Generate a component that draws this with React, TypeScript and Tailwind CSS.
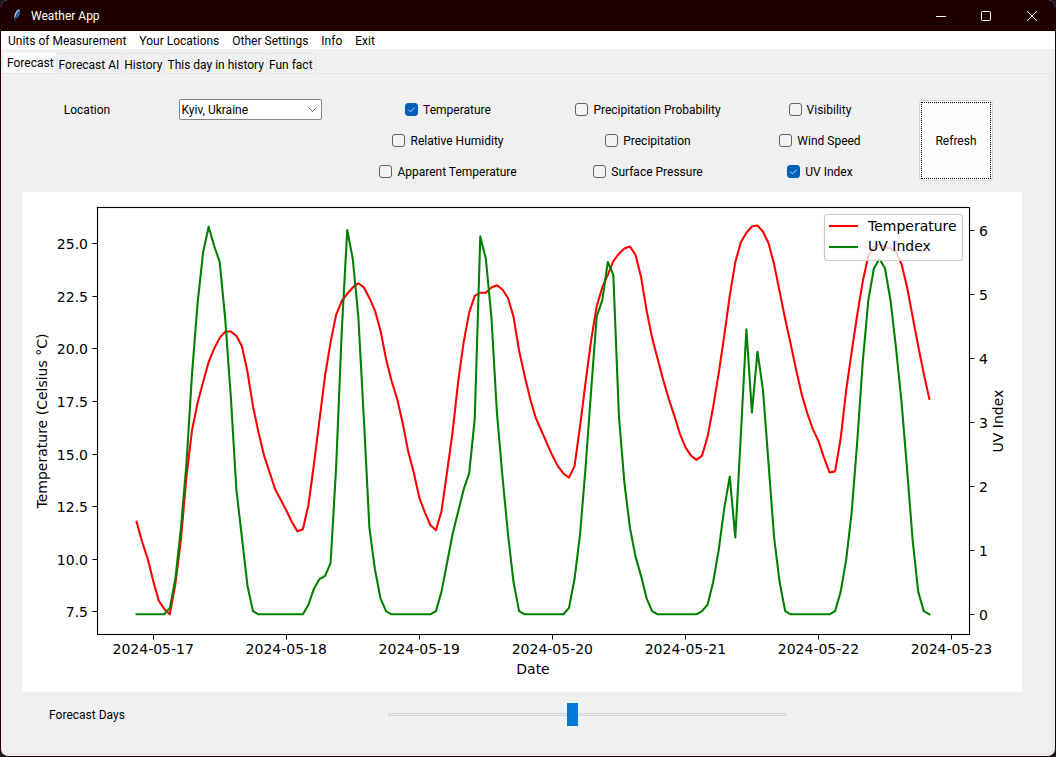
import { useState } from "react";

const TEMPERATURE = [
  11.75, 10.8, 10.0, 8.95, 8.0, 7.6, 7.35, 8.8, 10.9, 13.9, 16.1, 17.4, 18.4, 19.35, 20.0, 20.5, 20.8, 20.8, 20.6, 20.1,
  18.9, 17.25, 16.0, 14.9, 14.1, 13.3, 12.8, 12.3, 11.75, 11.3, 11.4, 12.55, 14.5, 16.6, 18.7, 20.3, 21.6, 22.25, 22.6,
  22.9, 23.1, 22.9, 22.4, 21.8, 20.85, 19.5, 18.45, 17.6, 16.45, 15.1, 14.1, 12.9, 12.2, 11.6, 11.35, 12.25, 14.1, 16.0,
  18.4, 20.3, 21.7, 22.5, 22.65, 22.65, 22.9, 23.0, 22.8, 22.4, 21.5, 19.9, 18.7, 17.6, 16.7, 16.1, 15.5, 14.9, 14.4,
  14.05, 13.85, 14.4, 16.3, 18.4, 20.4, 22.0, 22.9, 23.5, 24.15, 24.5, 24.75, 24.85, 24.45, 23.4, 21.8, 20.5, 19.5, 18.5,
  17.6, 16.8, 15.95, 15.3, 14.9, 14.7, 14.9, 15.8, 17.2, 18.8, 20.6, 22.5, 24.1, 25.05, 25.5, 25.8, 25.85, 25.55, 25.0,
  24.0, 22.7, 21.4, 20.2, 18.95, 17.8, 16.9, 16.15, 15.6, 14.8, 14.1, 14.15, 15.7, 18.0, 19.85, 21.6, 23.2, 24.4, 24.85,
  24.95, 24.85, 24.75, 24.6, 24.0, 22.9, 21.5, 20.1, 18.8, 17.6,
];

const UV_INDEX = [
  0, 0, 0, 0, 0, 0, 0.1, 0.55, 1.35, 2.35, 3.75, 4.85, 5.65, 6.05, 5.75, 5.5, 4.6, 3.4, 1.95, 1.2, 0.45, 0.05, 0, 0, 0,
  0, 0, 0, 0, 0, 0, 0.15, 0.4, 0.55, 0.6, 0.8, 2.3, 4.4, 6.0, 5.55, 4.65, 3.05, 1.35, 0.7, 0.25, 0.05, 0, 0, 0, 0, 0, 0,
  0, 0, 0.05, 0.35, 0.8, 1.25, 1.6, 1.95, 2.2, 3.05, 5.9, 5.55, 4.65, 3.15, 2.15, 1.25, 0.5, 0.05, 0, 0, 0, 0, 0, 0, 0,
  0, 0.1, 0.55, 1.25, 2.3, 3.5, 4.65, 4.9, 5.5, 5.3, 3.1, 2.05, 1.35, 0.9, 0.6, 0.25, 0.05, 0, 0, 0, 0, 0, 0, 0, 0,
  0.05, 0.15, 0.5, 1.0, 1.65, 2.15, 1.2, 2.8, 4.45, 3.15, 4.1, 3.5, 2.35, 1.2, 0.5, 0.05, 0, 0, 0, 0, 0, 0, 0, 0, 0.05,
  0.35, 0.85, 1.6, 2.7, 3.95, 4.9, 5.4, 5.55, 5.4, 4.9, 4.15, 3.3, 2.25, 1.15, 0.35, 0.05, 0,
];

const DAYS = [17, 18, 19, 20, 21, 22, 23];
const TEMP_TICKS = [7.5, 10, 12.5, 15, 17.5, 20, 22.5, 25];
const UV_TICKS = [0, 1, 2, 3, 4, 5, 6];

const DAY_WIDTH = 133.05;
const xOfHour = (hour: number) => 131.2 + (hour * DAY_WIDTH) / 24;
const yOfTemp = (t: number) => 51.3 + (25 - t) * 21.02;
const yOfUv = (u: number) => 422.3 - u * 64.05;
const snap = (v: number) => Math.floor(v) + 0.5;

const linePoints = (values: number[], y: (v: number) => number) =>
  values.map((v, i) => `${xOfHour(i - 3).toFixed(2)},${y(v).toFixed(2)}`).join(" ");

function ForecastChart({ showTemp, showUv }: { showTemp: boolean; showUv: boolean }) {
  return (
    <svg
      viewBox="0 0 1000 500"
      role="img"
      aria-label="Temperature and UV index by date"
      className="block w-full bg-white font-['DejaVu_Sans',sans-serif] text-[14px]"
    >
      <g fill="none" strokeWidth="2.08" strokeLinejoin="round" strokeLinecap="square">
        {showTemp && <polyline stroke="#ff0000" points={linePoints(TEMPERATURE, yOfTemp)} />}
        {showUv && <polyline stroke="#008000" points={linePoints(UV_INDEX, yOfUv)} />}
      </g>
      <rect x="75.5" y="15.5" width="872" height="427" fill="none" stroke="#000" strokeWidth="1.1" />
      {DAYS.map((day, i) => (
        <g key={day}>
          <path d={`M${snap(xOfHour(i * 24) + 0.3)} 443v4.5`} stroke="#000" />
          <text x={xOfHour(i * 24)} y="462" textAnchor="middle">{`2024-05-${day}`}</text>
        </g>
      ))}
      {TEMP_TICKS.map((t) => (
        <g key={t}>
          <path d={`M75 ${snap(yOfTemp(t) + 0.6)}h-4.5`} stroke="#000" />
          <text x="66" y={snap(yOfTemp(t) + 0.6) + 5.5} textAnchor="end">
            {t.toFixed(1)}
          </text>
        </g>
      ))}
      {UV_TICKS.map((u) => (
        <g key={u}>
          <path d={`M948 ${snap(yOfUv(u) + 0.2)}h4.5`} stroke="#000" />
          <text x="957" y={snap(yOfUv(u) + 0.2) + 5}>
            {u}
          </text>
        </g>
      ))}
      <text x="511" y="482" textAnchor="middle">
        Date
      </text>
      <text transform="translate(25 229) rotate(-90)" textAnchor="middle">
        Temperature (Celsius °C)
      </text>
      <text transform="translate(981 229) rotate(-90)" textAnchor="middle">
        UV Index
      </text>
      <rect x="802.5" y="22.5" width="138" height="46" rx="3" fill="#fff" fillOpacity="0.8" stroke="#ccc" strokeWidth="1.2" />
      <path d="M807 34h29" stroke="#ff0000" strokeWidth="2.08" />
      <path d="M807 55h29" stroke="#008000" strokeWidth="2.08" />
      <text x="846" y="39">
        Temperature
      </text>
      <text x="846" y="59">
        UV Index
      </text>
    </svg>
  );
}

function Check({ label, checked, onChange }: { label: string; checked: boolean; onChange: () => void }) {
  return (
    <label className="flex h-[31px] items-center justify-center gap-[5px] whitespace-nowrap">
      <span className="grid size-[13px] place-items-center">
        <input
          type="checkbox"
          checked={checked}
          onChange={onChange}
          className="peer col-start-1 row-start-1 size-[13px] appearance-none rounded-[3px] border border-[#626262] bg-[#f3f3f3] checked:border-[#005fb8] checked:bg-[#005fb8]"
        />
        <svg
          viewBox="0 0 13 13"
          className="pointer-events-none invisible col-start-1 row-start-1 size-[13px] peer-checked:visible"
          fill="none"
          stroke="#cfe2f4"
          strokeWidth="1"
        >
          <path d="M3.3 6.6 5.5 8.8 9.8 4.5" />
        </svg>
      </span>
      {label}
    </label>
  );
}

const CHECK_COLUMNS = [
  ["Temperature", "Relative Humidity", "Apparent Temperature"],
  ["Precipitation Probability", "Precipitation", "Surface Pressure"],
  ["Visibility", "Wind Speed", "UV Index"],
];

const MENUS = ["Units of Measurement", "Your Locations", "Other Settings", "Info", "Exit"];
const TABS = ["Forecast AI", "History", "This day in history", "Fun fact"];

export default function App() {
  const [selected, setSelected] = useState<string[]>(["Temperature", "UV Index"]);
  const [days, setDays] = useState(7);
  const toggle = (name: string) =>
    setSelected((s) => (s.includes(name) ? s.filter((n) => n !== name) : [...s, name]));

  return (
    <div className="min-h-screen bg-[#171b20] font-[Roboto,'Noto_Sans',sans-serif] text-[12px] leading-4 text-black">
      <div className="flex min-h-screen flex-col overflow-hidden rounded-lg border-x border-b border-[#1e0000] bg-[#f0f0f0]">
        <header className="flex h-[31px] shrink-0 items-center bg-[#1e0000] text-white">
          <svg viewBox="0 0 16 16" className="ml-2 size-4" aria-hidden="true">
            <path d="M6 13C4.800 9.500 5.800 4.500 10.600 1.200c1 3-.3 7.300-3.600 9.300z" fill="#3d84cc" />
            <path d="M5.800 9.500C5.800 6.300 7.500 3.300 10.200 1.700" fill="none" stroke="#b9dcf6" strokeWidth="1.100" />
            <path d="M10 3.500C8 6 6.500 9.500 6 14" fill="none" stroke="#10243c" strokeWidth="1" />
          </svg>
          <h1 className="ml-[6px] grow">Weather App</h1>
          <button type="button" aria-label="Minimize" className="grid h-full w-[44px] place-items-center">
            <svg viewBox="0 0 10 10" className="size-[10px]" stroke="#fff" fill="none">
              <path d="M0 5.500h10" />
            </svg>
          </button>
          <button type="button" aria-label="Maximize" className="grid h-full w-[46px] place-items-center">
            <svg viewBox="0 0 10 10" className="size-[10px]" stroke="#fff" fill="none">
              <rect x=".5" y=".5" width="9" height="9" rx="1" />
            </svg>
          </button>
          <button type="button" aria-label="Close" className="grid h-full w-[46px] place-items-center">
            <svg viewBox="0 0 10 10" className="size-[10px]" stroke="#fff" fill="none">
              <path d="M0 0 10 10M10 0 0 10" />
            </svg>
          </button>
        </header>

        <nav aria-label="Menu" className="flex h-[18px] shrink-0 items-center gap-[13px] bg-white px-[7px] pt-[2px]">
          {MENUS.map((m) => (
            <button key={m} type="button" className="whitespace-nowrap">
              {m}
            </button>
          ))}
        </nav>

        <div className="flex grow flex-col pt-[2px] pr-[2px] pb-[2px] pl-px">
          <div role="tablist" className="flex h-[22px] shrink-0 items-end">
            <button
              type="button"
              role="tab"
              aria-selected="true"
              className="-mb-px h-[23px] border border-b-0 border-[#ebebeb] bg-[#f9f9f9] pr-[2px] pl-1 pb-px whitespace-nowrap"
            >
              Forecast
            </button>
            {TABS.map((t) => (
              <button
                key={t}
                type="button"
                role="tab"
                aria-selected="false"
                className="h-[20px] border-t border-r border-[#e5e5e5] px-[2px] pt-[2px] whitespace-nowrap"
              >
                {t}
              </button>
            ))}
          </div>

          <main role="tabpanel" className="flex grow flex-col border-t border-r border-b border-[#e5e5e5] pt-[20px] pr-[30px] pl-[20px]">
            <div className="grid grid-cols-[130fr_196fr_200fr_200fr_144fr_130fr]">
              <label htmlFor="location" className="flex h-[31px] items-center justify-center">
                Location
              </label>
              <div className="flex h-[31px] items-center justify-center">
                <span className="grid w-[143px]">
                  <select
                    id="location"
                    className="col-start-1 row-start-1 h-[21px] w-full appearance-none rounded-[2px] border border-[#858585] bg-white pl-[2px]"
                  >
                    <option>Kyiv, Ukraine</option>
                  </select>
                  <svg
                    viewBox="0 0 9 5"
                    className="pointer-events-none col-start-1 row-start-1 mr-[5px] w-[9px] self-center justify-self-end"
                    fill="none"
                    stroke="#5f5f5f"
                  >
                    <path d="M.5.5l4 4 4-4" />
                  </svg>
                </span>
              </div>
              {CHECK_COLUMNS.map((column) => (
                <div key={column[0]}>
                  {column.map((name) => (
                    <Check key={name} label={name} checked={selected.includes(name)} onChange={() => toggle(name)} />
                  ))}
                </div>
              ))}
              <div className="flex items-center pl-[27px]">
                <button
                  type="button"
                  className="h-[81px] w-[74px] rounded-[4px] border border-[#d0d0d0] bg-[#fdfdfd] p-px"
                >
                  <span className="grid h-full place-items-center border border-dotted border-black">Refresh</span>
                </button>
              </div>
            </div>

            <div className="pt-[5px]">
              <ForecastChart showTemp={selected.includes("Temperature")} showUv={selected.includes("UV Index")} />
            </div>

            <div className="grid h-[45px] grid-cols-[130fr_236fr_398fr_236fr] items-center">
              <label htmlFor="days" className="text-center whitespace-nowrap">
                Forecast Days
              </label>
              <input
                id="days"
                type="range"
                min={1}
                max={14}
                value={days}
                onChange={(e) => setDays(Number(e.target.value))}
                className="col-start-3 h-[23px] w-full appearance-none bg-transparent [&::-webkit-slider-runnable-track]:h-[3px] [&::-webkit-slider-runnable-track]:border [&::-webkit-slider-runnable-track]:border-[#d6d6d6] [&::-webkit-slider-runnable-track]:bg-[#e7eaea] [&::-webkit-slider-thumb]:-mt-[11px] [&::-webkit-slider-thumb]:h-[23px] [&::-webkit-slider-thumb]:w-[11px] [&::-webkit-slider-thumb]:appearance-none [&::-webkit-slider-thumb]:bg-[#007ad9]"
              />
            </div>
          </main>
        </div>
      </div>
    </div>
  );
}
